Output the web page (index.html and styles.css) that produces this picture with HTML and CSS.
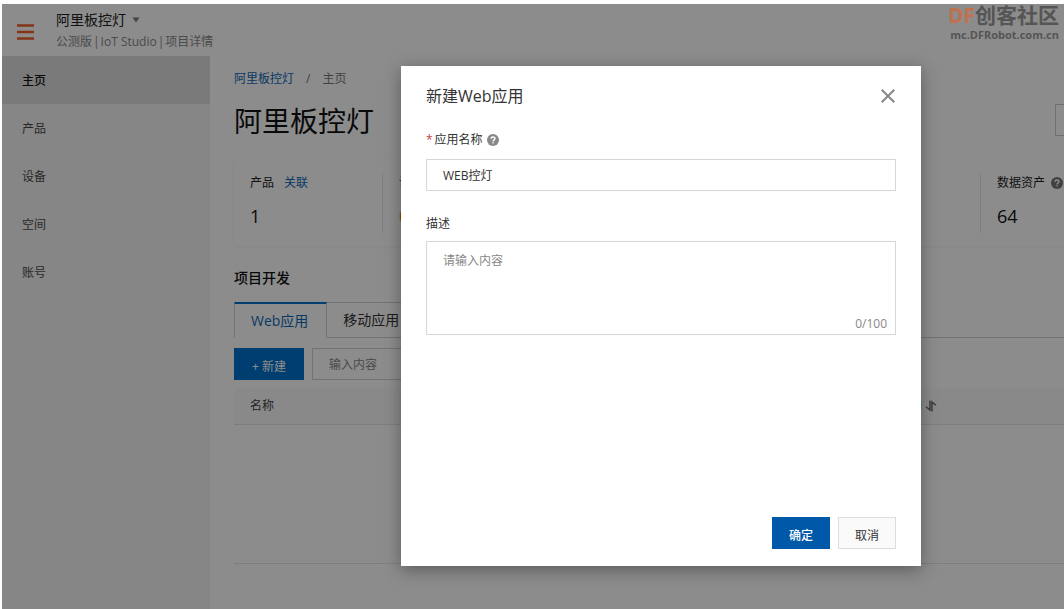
FILE: index.html
```html
<!DOCTYPE html>
<html lang="zh-CN">
<head>
<meta charset="utf-8">
<title>项目详情</title>
<link rel="stylesheet" href="styles.css">
</head>
<body>
<div class="app">
  <header class="topbar">
    <button class="burger" type="button" aria-label="菜单">
      <svg width="17" height="16" viewBox="0 0 17 16"><path d="M0 1.5h17M0 8h17M0 14.5h17" stroke="#f0602a" stroke-width="2.6"/></svg>
    </button>
    <div class="project">
      <button class="project-name" type="button">阿里板控灯
        <svg width="8" height="6" viewBox="0 0 8 6"><path d="M0.5 0.5h7L4 5.5z" fill="#7a7a7a"/></svg>
      </button>
      <div class="project-sub"><span>公测版</span><span>|</span><span>IoT Studio</span><span>|</span><span>项目详情</span></div>
    </div>
  </header>
  <div class="body">
    <nav class="sidebar">
      <a class="nav-item active" href="#">主页</a>
      <a class="nav-item" href="#">产品</a>
      <a class="nav-item" href="#">设备</a>
      <a class="nav-item" href="#">空间</a>
      <a class="nav-item" href="#">账号</a>
    </nav>
    <main class="main">
      <div class="content">
        <div class="crumbs"><a href="#">阿里板控灯</a><span>/</span><span>主页</span></div>
        <div class="title-row">
          <h1>阿里板控灯</h1>
          <button class="config" type="button" aria-label="配置"></button>
        </div>
        <section class="stats">
          <div class="stat"><div class="stat-label">产品 <a href="#">关联</a></div><div class="stat-value">1</div></div>
          <div class="stat"><div class="stat-label">设备</div><div class="stat-value warn">0</div></div>
          <div class="stat wide"></div>
          <div class="stat"><div class="stat-label">数据资产
            <svg width="12" height="12" viewBox="0 0 12 12"><circle cx="6" cy="6" r="6" fill="#777"/><path d="M4.1 4.7C4.1 2.3 8 2.4 8 4.6 8 6 6.1 5.9 6.1 7.4M6.1 8.3v1.3" fill="none" stroke="#fff" stroke-width="1.4"/></svg>
          </div><div class="stat-value">64</div></div>
        </section>
        <h2>项目开发</h2>
        <div class="tabs">
          <button class="tab current" type="button">Web应用</button>
          <button class="tab" type="button">移动应用</button>
        </div>
        <div class="toolbar">
          <button class="create" type="button">+ 新建</button>
          <input class="search" type="text" placeholder="输入内容" aria-label="搜索">
        </div>
        <table class="list">
          <thead>
            <tr>
              <th class="col-name">名称</th>
              <th><span class="sortable">修改时间
                <svg width="12" height="12" viewBox="0 0 12 12"><path d="M5 0.5v9.5L1 6.8M7 11.5V2l4 3.2" fill="none" stroke="#666" stroke-width="1.4"/></svg>
              </span></th>
            </tr>
          </thead>
          <tbody><tr><td colspan="2"></td></tr></tbody>
        </table>
      </div>
    </main>
  </div>
  <div class="overlay">
    <form class="dialog" role="dialog" aria-labelledby="dlg-title">
      <div class="dialog-head">
        <div class="dialog-title" id="dlg-title">新建Web应用</div>
        <button class="close" type="button" aria-label="关闭">
          <svg width="14" height="14" viewBox="0 0 14 14"><path d="M0.7 0.7l12.6 12.6M13.3 0.7L0.7 13.3" stroke="#888" stroke-width="2"/></svg>
        </button>
      </div>
      <label class="label" for="app-name"><span class="required"><span class="star">*</span>应用名称</span>
        <svg width="12" height="12" viewBox="0 0 12 12"><circle cx="6" cy="6" r="6" fill="#888"/><path d="M4.1 4.7C4.1 2.3 8 2.4 8 4.6 8 6 6.1 5.9 6.1 7.4M6.1 8.3v1.3" fill="none" stroke="#fff" stroke-width="1.4"/></svg>
      </label>
      <input class="field" id="app-name" type="text" value="WEB控灯">
      <label class="label second" for="app-desc">描述</label>
      <div class="area">
        <textarea id="app-desc" placeholder="请输入内容"></textarea>
        <div class="count">0/100</div>
      </div>
      <div class="actions">
        <button class="ok" type="submit">确定</button>
        <button class="cancel" type="button">取消</button>
      </div>
    </form>
  </div>
</div>
<div class="mark">
  <div class="mark-name"><span>DF</span>创客社区</div>
  <div class="mark-url">mc.DFRobot.com.cn</div>
</div>
</body>
</html>
```
FILE: styles.css
```css
* { box-sizing: border-box; }
body {
  margin: 0;
  padding: 4px 0 0 2px;
  height: 100vh;
  overflow: hidden;
  background: #fdfdfd;
  color: #333;
  font: 12px/20px "Open Sans", "Noto Sans CJK SC", sans-serif;
}
button, input, textarea { font: inherit; color: inherit; border-radius: 0; outline: none; }
button { border: 0; padding: 0; background: none; }
a { color: #1068b8; text-decoration: none; }
svg { display: block; flex: none; }

.app { position: relative; display: flex; flex-direction: column; height: 100%; overflow: hidden; background: #fff; }
.topbar { display: flex; align-items: center; flex: none; height: 52px; padding-left: 15px; }
.burger { margin: 3px 22px 0 0; }
.project-name { display: flex; align-items: center; gap: 6px; font-size: 14px; line-height: 22px; color: #222; }
.project-sub { display: flex; gap: 1px; padding-top: 1px; color: #888; line-height: 20px; }

.body { display: flex; flex: 1; min-height: 0; }
.sidebar { flex: none; width: 208px; background: #f5f5f5; }
.nav-item { display: block; height: 48px; padding: 2px 0 0 20px; line-height: 46px; color: #4a4a4a; }
.nav-item.active { background: #dedede; color: #111; font-weight: 500; }

.main { flex: 1; min-width: 0; overflow: hidden; padding: 13px 24px 0; }
.content { min-width: 1062px; }
.crumbs { display: flex; gap: 12px; color: #777; }
.title-row { display: flex; align-items: center; justify-content: space-between; margin-top: 11px; height: 40px; }
h1 { margin: 0; padding-top: 2px; font-size: 28px; line-height: 38px; font-weight: 400; color: #111; }
.config { width: 241px; height: 32px; border: 1px solid #ccc; }

.stats { display: flex; height: 86px; margin-top: 20px; padding: 13px 0; box-shadow: 0 1px 3px rgba(0, 0, 0, .06); }
.stat { flex: none; width: 149px; padding-left: 16px; border-right: 1px solid #e8e8e8; }
.stat.wide { width: 449px; }
.stat:last-child { border-right: 0; }
.stat-label { display: flex; align-items: center; gap: 6px; color: #222; }
.stat-label a { margin-left: 4px; }
.stat-value { margin-top: 11px; font-size: 18px; line-height: 24px; color: #111; }
.stat-value.warn { color: #e08a00; }

h2 { margin: 22px 0 14px; font-size: 14px; line-height: 20px; font-weight: 500; color: #111; }
.tabs { display: flex; height: 36px; border-bottom: 1px solid #d0d0d0; }
.tab { height: 36px; padding: 0 16px; font-size: 14px; border: solid #d0d0d0; border-width: 1px 1px 1px 0; }
.tab.current { padding-right: 18px; color: #1068b8; border-left-width: 1px; border-top: 2px solid #0070cc; border-bottom-color: #fff; }
.toolbar { display: flex; gap: 8px; margin-top: 10px; }
.create { width: 70px; height: 32px; padding-top: 5px; background: #0070cc; color: #fff; }
.search { width: 200px; height: 32px; padding: 0 16px; border: 1px solid #d0d0d0; background: #fff; }
.search::placeholder, textarea::placeholder { color: #888; opacity: 1; }

.list { width: 100%; margin-top: 8px; border-collapse: collapse; table-layout: fixed; }
.list th { height: 36px; padding: 0 16px; background: #fafafa; border-bottom: 1px solid #e4e4e4; text-align: left; font-weight: 400; color: #444; }
.sortable { display: flex; align-items: center; gap: 3px; }
.list .col-name { width: 624px; }
.list td { height: 139px; border-bottom: 1px solid #e4e4e4; }

.overlay { position: absolute; inset: 0; padding: 62px 0 0 399px; background: rgba(0, 0, 0, .45); }
.dialog {
  display: flex;
  flex-direction: column;
  width: 520px;
  min-height: 500px;
  padding: 17px 25px;
  background: #fff;
  box-shadow: 0 4px 16px rgba(0, 0, 0, .35);
}
.dialog-head { display: flex; align-items: center; justify-content: space-between; height: 26px; }
.dialog-title { font-size: 16px; line-height: 24px; }
.close { padding: 1px; }
.label { display: flex; align-items: center; gap: 4px; margin: 21px 0 9px; }
.label.second { margin-top: 23px; margin-bottom: 7px; }
.required { display: flex; gap: 2px; }
.star { color: #c5443a; }
.field { width: 100%; height: 32px; padding: 0 16px; border: 1px solid #d7d7d7; }
.area { display: flex; flex-direction: column; height: 94px; border: 1px solid #d7d7d7; }
.area textarea { flex: 1; width: 100%; padding: 9px 16px; border: 0; resize: none; background: none; }
.count { padding-right: 8px; text-align: right; color: #888; }
.actions { display: flex; justify-content: flex-end; gap: 8px; margin-top: auto; }
.actions button { width: 58px; height: 32px; padding-top: 5px; }
.ok { background: #0058a8; color: #fff; font-weight: 500; }
.actions .cancel { border: 1px solid #ddd; background: #fafafa; }

.mark { position: absolute; top: 3px; right: 5px; color: #555; font-weight: 700; text-align: right; }
.mark-name { font-size: 21px; line-height: 24px; }
.mark-name span { color: #c0714f; }
.mark-url { font-size: 11px; line-height: 16px; }
```
